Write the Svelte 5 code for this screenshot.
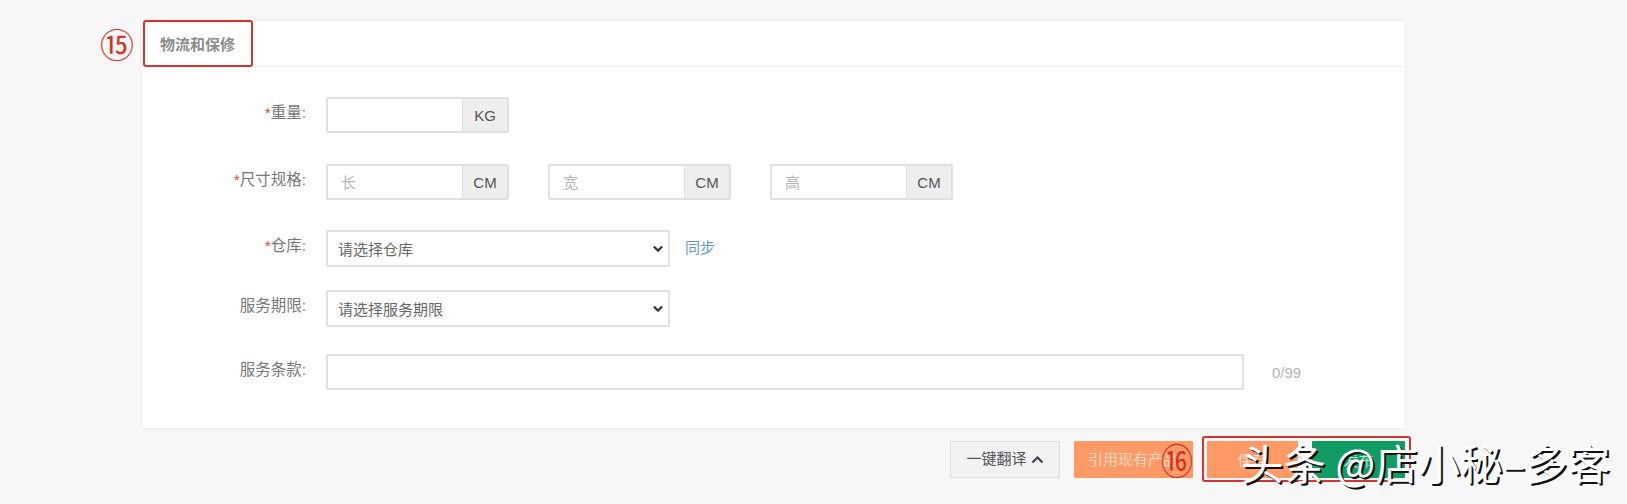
<script>
  const dims = ["长", "宽", "高"];
</script>

<div class="page">
  <section class="panel">
    <header class="panel-head">
      <h3>物流和保修</h3>
      <span class="mark num15">⑮</span>
      <span class="frame frame-head"></span>
    </header>
    <div class="panel-body">
      <div class="row row-weight">
        <label><i>*</i>重量:</label>
        <div class="group">
          <input type="text" />
          <span class="addon">KG</span>
        </div>
      </div>
      <div class="row row-size">
        <label><i>*</i>尺寸规格:</label>
        <div class="dims">
          {#each dims as d}
            <div class="group">
              <input type="text" placeholder={d} />
              <span class="addon">CM</span>
            </div>
          {/each}
        </div>
      </div>
      <div class="row row-store">
        <label><i>*</i>仓库:</label>
        <div class="select">请选择仓库
          <svg viewBox="0 0 12 8" width="10" height="7"><path d="M1 1.5l5 5 5-5" fill="none" stroke="#333" stroke-width="2.6" /></svg>
        </div>
        <a href="#sync">同步</a>
      </div>
      <div class="row row-period">
        <label>服务期限:</label>
        <div class="select">请选择服务期限
          <svg viewBox="0 0 12 8" width="10" height="7"><path d="M1 1.5l5 5 5-5" fill="none" stroke="#333" stroke-width="2.6" /></svg>
        </div>
      </div>
      <div class="row row-terms">
        <label>服务条款:</label>
        <input class="terms" type="text" />
        <span class="count">0/99</span>
      </div>
    </div>
  </section>

  <footer class="actions">
    <button class="btn plain">一键翻译 <svg viewBox="0 0 12 8" width="13" height="8"><path d="M1 6.5l5-5 5 5" fill="none" stroke="#444" stroke-width="2.2" /></svg></button>
    <button class="btn orange cite">引用现有产品<span class="mark num16">⑯</span></button>
    <div class="submit">
      <button class="btn orange save">保存</button>
      <button class="btn green">发布</button>
    </div>
    <span class="watermark">头条 @店小秘–多客</span>
  </footer>
</div>

<style>
  :global(body) {
    margin: 0;
    background: #f7f7f7;
  }

  .page {
    height: 504px;
    overflow: hidden;
    padding-top: 21px;
    box-sizing: border-box;
    font-family: "Liberation Sans", "Noto Sans CJK SC", sans-serif;
    color: #666;
    font-size: 15px;
    position: relative;
  }

  .panel {
    margin-left: 142px;
    width: 1263px;
    height: 407px;
    background: #fff;
    box-shadow: 0 0 3px rgba(0, 0, 0, 0.08);
  }

  .panel-head {
    height: 46px;
    border-bottom: 1px solid #eee;
    box-sizing: border-box;
    display: flex;
    align-items: center;
    padding-left: 18px;
    position: relative;
  }

  h3 {
    margin: 0;
    font-size: 15px;
    font-weight: 700;
    color: #8c8c8c;
  }

  .frame-head {
    position: absolute;
    left: 1px;
    top: -1px;
    width: 110px;
    height: 47px;
    box-sizing: border-box;
    border: 2px solid #d3352c;
    border-radius: 3px;
  }

  .mark {
    position: absolute;
    color: #d03325;
    line-height: 1;
    font-family: "Noto Sans CJK SC", sans-serif;
  }

  .num15 {
    left: -42px;
    top: 6px;
    font-size: 34px;
  }

  .panel-body {
    padding-left: 184px;
  }

  .row {
    display: flex;
    align-items: center;
    position: relative;
  }

  .row-weight { margin-top: 30px; }
  .row-size { margin-top: 31px; }
  .row-store { margin-top: 30px; }
  .row-period { margin-top: 23px; }
  .row-terms { margin-top: 27px; }

  label {
    position: absolute;
    right: 100%;
    margin-right: 20px;
    top: 3px;
    white-space: nowrap;
    color: #777;
    font-size: 15.5px;
  }

  label i {
    color: #e0473a;
    font-style: normal;
  }

  .dims {
    display: flex;
    gap: 39px;
  }

  .group {
    display: flex;
    height: 36px;
    width: 183px;
    box-sizing: border-box;
    border: 2px solid #e0e0e0;
    border-radius: 2px;
  }

  .group input {
    flex: 1;
    min-width: 0;
    border: 0;
    outline: 0;
    padding: 0 13px;
    font: inherit;
    background: #fff;
  }

  input::placeholder {
    color: #b5b5b5;
  }

  .addon {
    width: 44px;
    background: #eee;
    border-left: 1px solid #e0e0e0;
    color: #555;
    display: flex;
    align-items: center;
    justify-content: center;
  }

  .select {
    width: 344px;
    height: 37px;
    box-sizing: border-box;
    border: 2px solid #e0e0e0;
    border-radius: 2px;
    padding: 0 10px;
    display: flex;
    align-items: center;
    justify-content: space-between;
    color: #666;
  }

  .select svg {
    margin-right: -5px;
  }

  a {
    margin-left: 15px;
    color: #5f9bc8;
    text-decoration: none;
    position: relative;
    top: -2px;
  }

  .terms {
    width: 918px;
    height: 36px;
    box-sizing: border-box;
    border: 2px solid #e0e0e0;
    border-radius: 2px;
    outline: 0;
  }

  .count {
    margin-left: 28px;
    color: #b4b4b4;
  }

  .actions {
    display: flex;
    padding-left: 950px;
    margin-top: 13px;
    position: relative;
  }

  .btn {
    height: 37px;
    border: 0;
    font: inherit;
    border-radius: 1px;
    padding: 0;
  }

  .plain {
    width: 110px;
    background: #f2f2f2;
    border: 1px solid #ddd;
    color: #555;
    padding-bottom: 4px;
  }

  .orange {
    background: #ff9a66;
    color: #fbd9c4;
  }

  .cite {
    width: 119px;
    margin-left: 14px;
    text-align: left;
    padding-left: 14px;
    padding-bottom: 3px;
    position: relative;
    white-space: nowrap;
    overflow: visible;
  }

  .num16 {
    position: absolute;
    left: 85px;
    top: 0;
    font-size: 36px;
    transform: scaleX(0.9);
  }

  .submit {
    margin-left: 9px;
    margin-top: -5px;
    width: 209px;
    height: 46px;
    box-sizing: border-box;
    border: 2px solid #d3352c;
    border-radius: 3px;
    display: flex;
    gap: 14px;
    padding: 3px 4px 3px 3px;
  }

  .save {
    flex: 1;
  }

  .green {
    width: 93px;
    background: #119c63;
    color: #bfe5d3;
  }

  .watermark {
    position: absolute;
    left: 1241px;
    top: -7px;
    font-size: 42.4px;
    line-height: 1.3;
    white-space: nowrap;
    color: #fff;
    font-family: "Noto Sans CJK SC", sans-serif;
    text-shadow: 2px 2px 0 #111;
  }
</style>
